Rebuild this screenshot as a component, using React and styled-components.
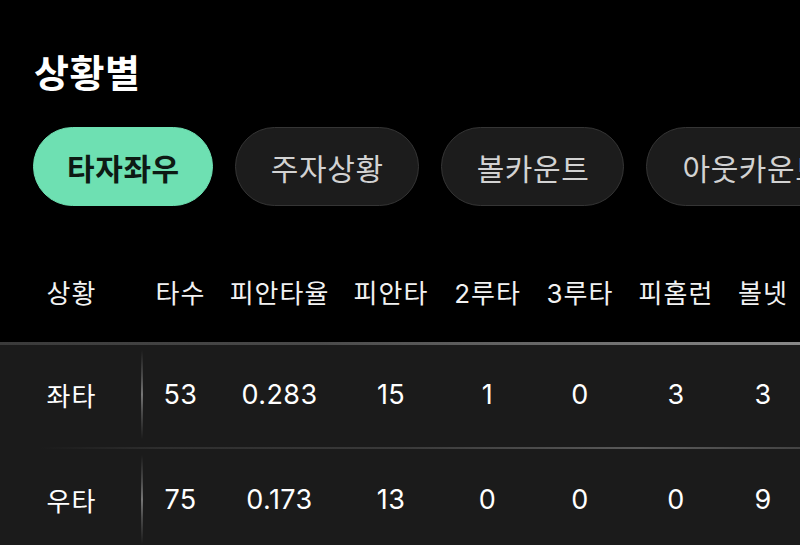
import React from "react";
import styled, { createGlobalStyle } from "styled-components";

const Global = createGlobalStyle`
  html, body { margin: 0; padding: 0; background: #000; }
  body { width: 800px; height: 545px; overflow: hidden; font-family: Inter, "Noto Sans CJK KR", "Noto Sans", sans-serif; }
`;

const Page = styled.div`
  background: #000;
  color: #fff;
  width: 800px;
  height: 545px;
  overflow: hidden;
`;

const Title = styled.h1`
  margin: 0;
  padding: 46px 0 0 34px;
  font-family: "Noto Sans CJK KR", sans-serif;
  font-size: 38px;
  font-weight: 700;
  line-height: 50px;
  letter-spacing: 0.6px;
  color: #fff;
`;

const ChipRow = styled.div`
  display: flex;
  gap: 22px;
  padding: 31px 0 0 33px;
  white-space: nowrap;
  overflow: hidden;
`;

const Chip = styled.div`
  flex: none;
  box-sizing: border-box;
  height: 79px;
  padding: ${p => (p.$active ? "0 32px 0 33px" : "0 34px 0 35px")};
  border-radius: 40px;
  display: flex;
  align-items: center;
  justify-content: center;
  font-family: "Noto Sans CJK KR", sans-serif;
  font-size: 30px;
  letter-spacing: 0.6px;
  font-weight: ${p => (p.$active ? 700 : 400)};
  color: ${p => (p.$active ? "#0d1a14" : "#d2d2d2")};
  background: ${p => (p.$active ? "#6ee0b2" : "#1c1c1c")};
  border: 1.5px solid ${p => (p.$active ? "#6ee0b2" : "#353535")};
`;

const TableWrap = styled.div`
  margin-top: 34px;
  width: 800px;
  overflow: hidden;
`;

const Table = styled.table`
  border-collapse: collapse;
  table-layout: fixed;
  white-space: nowrap;
  width: ${p => p.$width}px;
`;

const HeadCell = styled.th`
  height: 102px;
  padding: 0;
  font-size: 26px;
  font-weight: 400;
  color: #f2f2f2;
  text-align: center;
  letter-spacing: 1px;
`;

const Body = styled.tbody`
  background: #1b1b1b;
`;

const Row = styled.tr`
  background-image: ${p =>
    p.$top
      ? "linear-gradient(90deg, #3a3a3a 0%, #4a4a4a 40%, #7a7a7a 85%, #888 100%)"
      : "linear-gradient(90deg, #1b1b1b 5%, #2e2e2e 20%, #3a3a3a 50%, #5a5a5a 80%, #444 100%)"};
  background-size: 100% ${p => (p.$top ? "3px" : "2px")};
  background-repeat: no-repeat;
  background-position: top left;
`;

const Cell = styled.td`
  position: relative;
  height: 105px;
  padding: 0;
  font-size: 27px;
  letter-spacing: 0.4px;
  color: #fff;
  text-align: center;
  vertical-align: middle;
`;

const FirstCell = styled(Cell)`
  font-size: 26px;
  letter-spacing: 1px;
  &::after {
    content: "";
    position: absolute;
    right: 0;
    top: 8px;
    bottom: 8px;
    width: 2px;
    background: linear-gradient(180deg, rgba(120,120,120,0) 0%, rgba(120,120,120,0.5) 30%, rgba(140,140,140,0.8) 50%, rgba(120,120,120,0.5) 70%, rgba(120,120,120,0) 100%);
  }
`;

const chips = ["타자좌우", "주자상황", "볼카운트", "아웃카운트"];
const columns = [
  { h: "상황", w: 143 },
  { h: "타수", w: 75 },
  { h: "피안타율", w: 123 },
  { h: "피안타", w: 100 },
  { h: "2루타", w: 93 },
  { h: "3루타", w: 92 },
  { h: "피홈런", w: 100 },
  { h: "볼넷", w: 74 },
];
const rows = [
  ["좌타", "53", "0.283", "15", "1", "0", "3", "3"],
  ["우타", "75", "0.173", "13", "0", "0", "0", "9"],
];
const total = columns.reduce((s, c) => s + c.w, 0);

export default function App() {
  return (
    <Page>
      <Global />
      <Title>상황별</Title>
      <ChipRow>
        {chips.map((c, i) => (
          <Chip key={c} $active={i === 0}>{c}</Chip>
        ))}
      </ChipRow>
      <TableWrap>
        <Table $width={total}>
          <colgroup>
            {columns.map(c => (
              <col key={c.h} style={{ width: c.w }} />
            ))}
          </colgroup>
          <thead>
            <tr>
              {columns.map(c => (
                <HeadCell key={c.h}>{c.h}</HeadCell>
              ))}
            </tr>
          </thead>
          <Body>
            {rows.map((r, ri) => (
              <Row key={ri} $top={ri === 0}>
                {r.map((v, i) =>
                  i === 0 ? <FirstCell key={i}>{v}</FirstCell> : <Cell key={i}>{v}</Cell>
                )}
              </Row>
            ))}
          </Body>
        </Table>
      </TableWrap>
    </Page>
  );
}
